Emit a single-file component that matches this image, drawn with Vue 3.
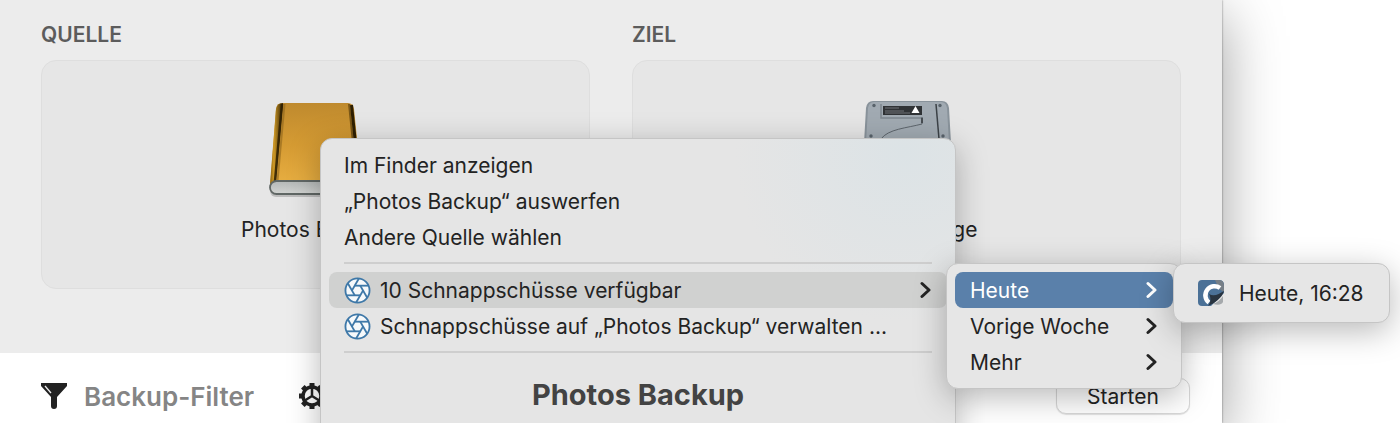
<template>
  <div class="desktop">
    <main class="window">
      <section class="drives">
        <div class="drive-col">
          <h2 class="drive-heading">QUELLE</h2>
          <button class="drive-card" type="button">
            <svg class="drive-icon" viewBox="0 0 104 104" aria-hidden="true">
              <defs>
                <linearGradient id="gold" x1="0" y1="0" x2="0" y2="1">
                  <stop offset="0" stop-color="#bf8a2e" />
                  <stop offset="0.5" stop-color="#d59b33" />
                  <stop offset="1" stop-color="#e9b042" />
                </linearGradient>
                <linearGradient id="goldEdge" x1="0" y1="0" x2="1" y2="0">
                  <stop offset="0" stop-color="#8a6210" />
                  <stop offset="0.3" stop-color="#d09a26" />
                  <stop offset="1" stop-color="#2e1f02" />
                </linearGradient>
                <linearGradient id="front" x1="0" y1="0" x2="0" y2="1">
                  <stop offset="0" stop-color="#b4b8b7" />
                  <stop offset="1" stop-color="#d2d4d2" />
                </linearGradient>
              </defs>
              <rect x="6" y="88" width="92" height="12" rx="6" fill="#000" opacity=".18" />
              <path d="M18 6H84Q89 6 90 12L98 90H6L12 12Q13 6 18 6Z" fill="url(#gold)" />
              <path d="M12 12Q13 6 19 6L12 85L6 87Z" fill="url(#goldEdge)" />
              <path d="M18 7L11 84" stroke="#2e1f02" stroke-width="2.5" opacity=".85" />
              <path d="M20.500 7L13.500 84" stroke="#8e651c" stroke-width="2" opacity=".6" />
              <path d="M85 7L93 85" stroke="#7a5717" stroke-width="2" />
              <path d="M87.500 8L95.500 85" stroke="#2e1f02" stroke-width="3" />
              <rect x="6" y="84" width="92" height="13" rx="6.5" fill="url(#front)" stroke="#606765" stroke-width="1.8" />
            </svg>
            <span class="drive-name">Photos Backup</span>
          </button>
        </div>
        <div class="drive-col">
          <h2 class="drive-heading">ZIEL</h2>
          <button class="drive-card" type="button">
            <svg class="drive-icon" viewBox="0 0 104 104" aria-hidden="true">
              <path d="M18 4H87Q93 4 94 11L96 46L100 72V96H3V72L9 46L11 11Q12 4 18 4Z" fill="#89939b" />
              <path d="M19 5H86Q91 5 92 11L94 46L98 76H5L11 46L13 11Q14 5 19 5Z" fill="#a1aab2" />
              <path d="M99 71H101V87H99Z" fill="#3c4c68" />
              <path d="M26 7V21H67V26" fill="none" stroke="#7e878e" stroke-width="1.5" />
              <path d="M67 20V27C52 31 33 32 26 42" fill="none" stroke="#5d656c" stroke-width="1" />
              <path d="M67 21V26" stroke="#474d52" stroke-width="2" />
              <path d="M81 7L84 42" stroke="#3c4247" stroke-width="1.500" />
              <rect x="28" y="9" width="39" height="9" fill="#303336" />
              <path d="M30 11H44M30 14H49M30 16H55" stroke="#717578" stroke-width="1" />
              <path d="M60.500 9L64.500 16H56.500Z" fill="#fff" />
              <circle cx="19" cy="8.500" r="1.700" fill="#59636b" />
              <circle cx="85" cy="8.500" r="1.700" fill="#59636b" />
              <circle cx="16" cy="39" r="1.700" fill="#59636b" />
              <circle cx="88" cy="39" r="1.700" fill="#59636b" />
            </svg>
            <span class="drive-name">Cloud Storage</span>
          </button>
        </div>
      </section>

      <footer class="toolbar">
        <button class="filter-button" type="button">
          <svg class="funnel" viewBox="0 0 28 28" aria-hidden="true">
            <path d="M1 1H27V4L17 15V24Q17 27 14 27Q11 27 11 24V15L1 4Z" fill="#222" />
            <path d="M5 4L11 11" stroke="#eee" stroke-width="1.300" />
          </svg>
          <span>Backup-Filter</span>
        </button>
        <button class="gear-button" type="button" aria-label="Einstellungen">
          <svg viewBox="0 0 28 28" aria-hidden="true">
            <circle cx="14" cy="14" r="9" fill="none" stroke="#222" stroke-width="3.500" />
            <path
              v-for="n in 8"
              :key="n"
              d="M14 1V5"
              :transform="`rotate(${n * 45} 14 14)`"
              stroke="#222"
              stroke-width="5"
            />
            <path d="M14 14V5M14 14L6 19M14 14L22 19" stroke="#222" stroke-width="2.500" />
          </svg>
        </button>
        <button class="start-button" type="button">Starten</button>
      </footer>
    </main>

    <div class="menu context-menu">
      <button v-for="label in actions" :key="label" class="item" type="button">{{ label }}</button>
      <hr class="separator" />
      <button
        v-for="item in snapshotItems"
        :key="item.label"
        class="item"
        :class="{ hovered: item.submenu }"
        type="button"
      >
        <svg class="aperture" viewBox="0 0 28 28" aria-hidden="true">
          <circle cx="14" cy="14" r="12.500" />
          <path v-for="n in 6" :key="n" d="M11 9H25.500" :transform="`rotate(${n * 60} 14 14)`" />
        </svg>
        <span>{{ item.label }}</span>
        <svg v-if="item.submenu" class="chevron" viewBox="0 0 12 18" aria-hidden="true">
          <path d="M2 2.500L9 9L2 15.500" />
        </svg>
      </button>
      <hr class="separator" />
      <h3 class="menu-title">Photos Backup</h3>
    </div>

    <div class="menu period-menu">
      <button
        v-for="period in periods"
        :key="period"
        class="item"
        :class="{ selected: period === activePeriod }"
        type="button"
        @click="activePeriod = period"
      >
        <span>{{ period }}</span>
        <svg class="chevron" viewBox="0 0 12 18" aria-hidden="true">
          <path d="M2 2.500L9 9L2 15.500" />
        </svg>
      </button>
    </div>

    <div class="menu snapshot-menu">
      <button class="item" type="button">
        <svg class="app-icon" viewBox="0 0 28 28" aria-hidden="true">
          <path d="M5 1H22Q27 1 27 6V14L14 27H5Q1 27 1 23V5Q1 1 5 1Z" fill="#4b7197" />
          <path d="M18 1H22Q27 1 27 7V13L22 10Z" fill="#777f87" />
          <path d="M23 9A9 9 0 1 0 12 23.500" fill="none" stroke="#fff" stroke-width="4.500" />
          <path d="M11 27C14 24 14 18 12 15C17 18 22 15 27 12C25 19 18 24 11 27Z" fill="#293440" />
          <path d="M16 25Q23 22 26 17V23Q24 27 16 25Z" fill="#a5a9ac" />
        </svg>
        <span>Heute, 16:28</span>
      </button>
    </div>
  </div>
</template>

<script setup>
import { ref } from 'vue'

const actions = ['Im Finder anzeigen', '„Photos Backup“ auswerfen', 'Andere Quelle wählen']
const snapshotItems = [
  { label: '10 Schnappschüsse verfügbar', submenu: true },
  { label: 'Schnappschüsse auf „Photos Backup“ verwalten ...', submenu: false }
]
const periods = ['Heute', 'Vorige Woche', 'Mehr']
const activePeriod = ref('Heute')
</script>

<style>
body {
  margin: 0;
}
</style>

<style scoped>
.desktop {
  position: relative;
  min-height: 100vh;
  overflow: hidden;
  display: flex;
  background: #fff;
  color: #232323;
  font: 21px/29px Inter, "Liberation Sans", sans-serif;
}

.desktop * {
  box-sizing: border-box;
}

button {
  margin: 0;
  border: 0;
  background: none;
  color: inherit;
  font: inherit;
}

svg {
  flex: none;
}

.window {
  flex: 1;
  margin-right: 178px;
  display: flex;
  flex-direction: column;
  background: #fff;
  box-shadow: 0 0 2px rgba(0, 0, 0, 0.5), 0 16px 56px rgba(0, 0, 0, 0.38);
}

.drives {
  display: flex;
  gap: 42px;
  padding: 21px 41px 64px;
  background: #ececec;
}

.drive-col {
  flex: 1;
}

.drive-heading {
  margin: 0 0 11px;
  font-size: 21px;
  line-height: 28px;
  font-weight: 600;
  color: #5c5c5c;
}

.drive-card {
  width: 100%;
  height: 229px;
  padding: 36px 0 0;
  display: flex;
  flex-direction: column;
  align-items: center;
  gap: 14px;
  border: 1px solid #dedede;
  border-radius: 15px;
  background: #e6e6e6;
}

.drive-icon {
  width: 104px;
  height: 104px;
}

.toolbar {
  flex: 1;
  display: flex;
  align-items: center;
  padding: 16px 32px 0 40px;
}

.filter-button {
  display: flex;
  align-items: center;
  gap: 16px;
  padding: 0;
  font-size: 26px;
  font-weight: 600;
  color: #858585;
}

.funnel {
  width: 28px;
  height: 28px;
}

.gear-button {
  display: flex;
  margin-left: 44px;
  padding: 0;
}

.gear-button svg {
  width: 28px;
  height: 28px;
}

.start-button {
  width: 134px;
  height: 36px;
  margin-left: auto;
  border: 1px solid #d8d8d8;
  border-radius: 10px;
  background: #fff;
  box-shadow: 0 1px 1px rgba(0, 0, 0, 0.12);
}

.menu {
  position: absolute;
  padding: 8px;
  border: 1px solid #c5c5c5;
  border-radius: 12px;
  background: #e6e6e6;
  box-shadow: 0 8px 32px rgba(0, 0, 0, 0.28);
}

.context-menu {
  top: 138px;
  left: 320px;
  width: 636px;
  padding-bottom: 64px;
  background: radial-gradient(circle at 92% 4%, #dce3e6, rgba(229, 229, 229, 0) 170px), #e5e5e5;
}

.period-menu {
  top: 263px;
  left: 946px;
  width: 236px;
}

.snapshot-menu {
  top: 263px;
  left: 1173px;
  width: 217px;
  padding: 11px 8px;
}

.item {
  width: 100%;
  height: 36px;
  display: flex;
  align-items: center;
  gap: 9px;
  padding: 0 15px;
  border-radius: 8px;
  text-align: left;
  white-space: nowrap;
}

.hovered {
  background: #d0d1d0;
}

.selected {
  background: #5a80aa;
  color: #fff;
}

.aperture {
  width: 27px;
  height: 27px;
  fill: none;
  stroke: #3e78a8;
  stroke-width: 1.9;
}

.aperture circle {
  fill: #f6f9fb;
}

.chevron {
  width: 12px;
  height: 18px;
  margin-left: auto;
  fill: none;
  stroke: currentColor;
  stroke-width: 3;
  stroke-linecap: round;
  stroke-linejoin: round;
}

.separator {
  height: 2px;
  margin: 7px 15px 8px;
  border: 0;
  background: #cecece;
}

.menu-title {
  margin: 24px 0 0;
  font-size: 29px;
  line-height: 36px;
  font-weight: 700;
  color: #434343;
  text-align: center;
}

.snapshot-menu .item {
  gap: 14px;
}

.app-icon {
  width: 28px;
  height: 28px;
}
</style>
